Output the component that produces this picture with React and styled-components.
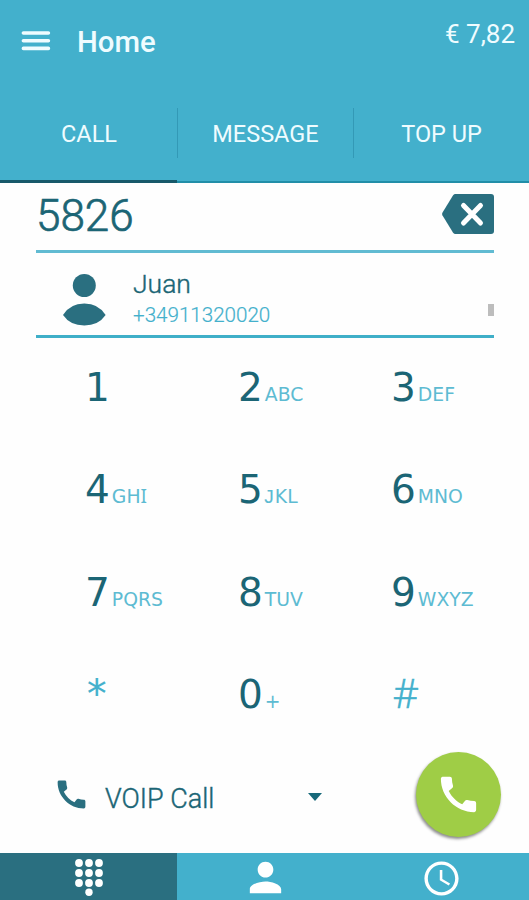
import React, { useState } from 'react';
import styled, { createGlobalStyle } from 'styled-components';
import { MdAccessTime, MdCall, MdPerson } from 'react-icons/md';

const GlobalStyle = createGlobalStyle`
    * {
      box-sizing: border-box;
    }
    body {
      margin: 0;
      background: #fefefe;
      font-family: Roboto, sans-serif;
    }
    button {
      border: 0;
      padding: 0;
      background: none;
      font: inherit;
      color: inherit;
      cursor: pointer;
    }
    svg {
      display: block;
      flex: none;
    }
`;

const Screen = styled.div`
    display: flex;
    flex-direction: column;
    width: 529px;
    height: 900px;
    overflow: hidden;
    color: #1b6575;
`;

const Header = styled.header`
    height: 183px;
    background-color: #43b0cc;
    color: #effcff;
`;

const TopBar = styled.div`
    display: flex;
    align-items: flex-start;
    height: 84px;
    padding: 0 14px 0 21px;
`;

const MenuButton = styled.button`
    margin-top: 30px;
`;

const Title = styled.h1`
    flex: 1;
    margin: 25px 0 0 26px;
    font-size: 29.3px;
    line-height: 34px;
    font-weight: 500;
`;

const Balance = styled.div`
    margin-top: 18px;
    font-size: 26px;
    line-height: 32px;
`;

const Tabs = styled.nav`
    display: grid;
    grid-template-columns: 177px 176px 176px;
    height: 99px;
`;

const Tab = styled.button`
    display: flex;
    align-items: flex-start;
    padding-top: 24px;
    border-bottom: ${props => (props.$active ? '3px solid #17596a' : '2px solid #218ea8')};
    span {
      flex: 1;
      height: 50px;
      font-size: 23.5px;
      line-height: 53px;
      border-left: 1px solid ${props => (props.$divider ? '#3399b6' : 'transparent')};
    }
`;

const Main = styled.main`
    flex: 1;
    padding: 0 35px 0 36px;
`;

const NumberRow = styled.div`
    display: flex;
    justify-content: space-between;
    align-items: flex-start;
    height: 70px;
    padding-top: 11px;
    border-bottom: 3px solid #61bbd2;
`;

const Dialed = styled.div`
    font-size: 44px;
    line-height: 44px;
    font-weight: 300;
    -webkit-text-stroke: 0.7px currentColor;
`;

const ContactRow = styled.div`
    display: flex;
    height: 85px;
    border-bottom: 3px solid #3fafc8;
    > svg {
      margin: 20px 0 0 27px;
    }
`;

const Contact = styled.div`
    flex: 1;
    padding: 14px 0 0 27px;
`;

const Name = styled.div`
    font-size: 26.5px;
    line-height: 34px;
    font-weight: 300;
    -webkit-text-stroke: 0.4px currentColor;
`;

const Phone = styled.div`
    font-size: 20.6px;
    line-height: 29px;
    font-weight: 300;
    -webkit-text-stroke: 0.2px currentColor;
    color: #43b0cc;
`;

const Thumb = styled.div`
    width: 6px;
    height: 12px;
    margin-top: 51px;
    background: #bdbdbd;
`;

const Keypad = styled.div`
    display: grid;
    grid-template-columns: repeat(3, 153px);
    grid-auto-rows: 50px;
    row-gap: 52.3px;
    padding: 25px 0 0 49px;
    margin-right: -36px;
`;

const Key = styled.button`
    display: flex;
    align-items: baseline;
    font-family: 'DejaVu Sans', sans-serif;
    font-size: 39px;
    line-height: 50px;
    text-align: left;
    color: ${props => (props.$symbol ? '#43b0cc' : '#1b6575')};
`;

const Star = styled.span`
    padding-left: 2px;
    line-height: 47px;
    -webkit-text-stroke: 0.2px currentColor;
`;

const Hash = styled.span`
    padding-left: 2px;
    font-family: 'Open Sans', sans-serif;
    font-weight: 300;
    font-size: 40px;
    line-height: 46px;
    -webkit-text-stroke: 0.6px currentColor;
`;

const Letters = styled.small`
    margin-left: 2px;
    font-size: 18.8px;
    color: #5dbbd2;
`;

const Capital = styled.span`
    font-family: ${props => (props.$mono ? "'Liberation Mono', monospace" : "'Noto Sans', sans-serif")};
    font-size: ${props => (props.$mono ? '20px' : '19px')};
    margin-left: ${props => (props.$mono ? '-2px' : '0')};
`;

const CallRow = styled.div`
    display: flex;
    align-items: center;
    height: 86px;
    margin: 32px -7px 0 17px;
`;

const CallType = styled.div`
    width: 203px;
    margin-left: 15px;
    padding-top: 9px;
    font-size: 27px;
    line-height: 34px;
    font-weight: 300;
    -webkit-text-stroke: 0.4px currentColor;
`;

const Caret = styled.span`
    width: 0;
    height: 0;
    margin-top: 5px;
    border: 7.5px solid transparent;
    border-top: 8px solid #17697a;
    border-bottom: 0;
`;

const CallButton = styled.button`
    display: flex;
    align-items: center;
    justify-content: center;
    width: 85px;
    height: 85px;
    margin-left: auto;
    border-radius: 50%;
    background: #9fcd46;
    color: #fff;
    box-shadow: -1px 2px 3px rgba(0, 0, 0, 0.45);
`;

const BottomBar = styled.nav`
    display: grid;
    grid-template-columns: 177px 176px 176px;
    height: 47px;
    background: #43b0cc;
    color: #fff;
`;

const BottomItem = styled.button`
    display: flex;
    align-items: flex-start;
    justify-content: center;
    padding-top: ${props => props.$top}px;
    background: ${props => (props.$active ? '#2a6f80' : '#43b0cc')};
`;

const keys = [
  ['1', ''], ['2', 'ABC'], ['3', 'DEF'],
  ['4', 'GHI'], ['5', 'JKL'], ['6', 'MNO'],
  ['7', 'PQRS'], ['8', 'TUV'], ['9', 'WXYZ'],
  ['*', ''], ['0', '+'], ['#', ''],
];

const MenuIcon = () => (
  <svg width="30" height="22" viewBox="0 0 30 22" stroke="currentColor" strokeWidth="3.6" strokeLinecap="round">
    <path d="M2.4 3h25M2.4 10.7h25M2.4 18.4h25" />
  </svg>
);

const BackspaceIcon = () => (
  <svg width="53" height="40" viewBox="0 0 53 40">
    <path d="M14.5 0H50q3 0 3 3v34q0 3-3 3H14.5q-1.5 0-2.4-1.3L1.4 21.2q-.7-1.2 0-2.4L12.1 1.3Q13 0 14.5 0z" fill="#2a6f80" />
    <path d="M22.5 11.5l17 17.5M39.5 11.5l-17 17.5" stroke="#fff" strokeWidth="5" strokeLinecap="round" />
  </svg>
);

const AvatarIcon = () => (
  <svg width="43" height="53" viewBox="0 0 43 53" fill="#2a6f80">
    <circle cx="21.3" cy="12.5" r="11.5" />
    <path d="M0 42Q7 30.500 21.300 30.500T42.600 42Q35.500 52.500 21.300 52.500T0 42z" />
  </svg>
);

const DialpadIcon = () => (
  <svg width="30" height="38" viewBox="0 0 30 38" fill="currentColor">
    {[5, 15, 25].map(y => [5, 15, 25].map(x => <circle key={`${x}-${y}`} cx={x} cy={y} r="3.9" />))}
    <circle cx="15" cy="34.3" r="3.7" />
  </svg>
);

const letters = text => text.split('').map(c => (
  c === 'I' || c === 'J' ? <Capital key={c} $mono={c === 'J'}>{c}</Capital> : c
));

const face = digit => {
  if (digit === '*') return <Star>*</Star>;
  if (digit === '#') return <Hash>#</Hash>;
  return <span>{digit}</span>;
};

const App = () => {
  const [number, setNumber] = useState('5826');
  const [tab, setTab] = useState('CALL');

  return (
    <>
      <GlobalStyle />
      <Screen>
        <Header>
          <TopBar>
            <MenuButton aria-label="Menu"><MenuIcon /></MenuButton>
            <Title>Home</Title>
            <Balance>€ 7,82</Balance>
          </TopBar>
          <Tabs>
            {['CALL', 'MESSAGE', 'TOP UP'].map((name, i) => (
              <Tab key={name} $active={tab === name} $divider={i > 0} onClick={() => setTab(name)}>
                <span>{name}</span>
              </Tab>
            ))}
          </Tabs>
        </Header>
        <Main>
          <NumberRow>
            <Dialed>{number}</Dialed>
            <button aria-label="Delete" onClick={() => setNumber(number.slice(0, -1))}><BackspaceIcon /></button>
          </NumberRow>
          <ContactRow>
            <AvatarIcon />
            <Contact>
              <Name>Juan</Name>
              <Phone>+34911320020</Phone>
            </Contact>
            <Thumb />
          </ContactRow>
          <Keypad>
            {keys.map(([digit, text]) => (
              <Key key={digit} $symbol={digit === '*' || digit === '#'} onClick={() => setNumber(number + digit)}>
                {face(digit)}
                {text && <Letters>{letters(text)}</Letters>}
              </Key>
            ))}
          </Keypad>
          <CallRow>
            <MdCall size={37} color="#2a6f80" />
            <CallType>VOIP Call</CallType>
            <Caret />
            <CallButton aria-label="Call"><MdCall size={47} /></CallButton>
          </CallRow>
        </Main>
        <BottomBar>
          <BottomItem $active $top={5} aria-label="Dialpad"><DialpadIcon /></BottomItem>
          <BottomItem $top={1} aria-label="Contacts"><MdPerson size={47} /></BottomItem>
          <BottomItem $top={5} aria-label="Recent"><MdAccessTime size={41} /></BottomItem>
        </BottomBar>
      </Screen>
    </>
  );
};

export default App;
